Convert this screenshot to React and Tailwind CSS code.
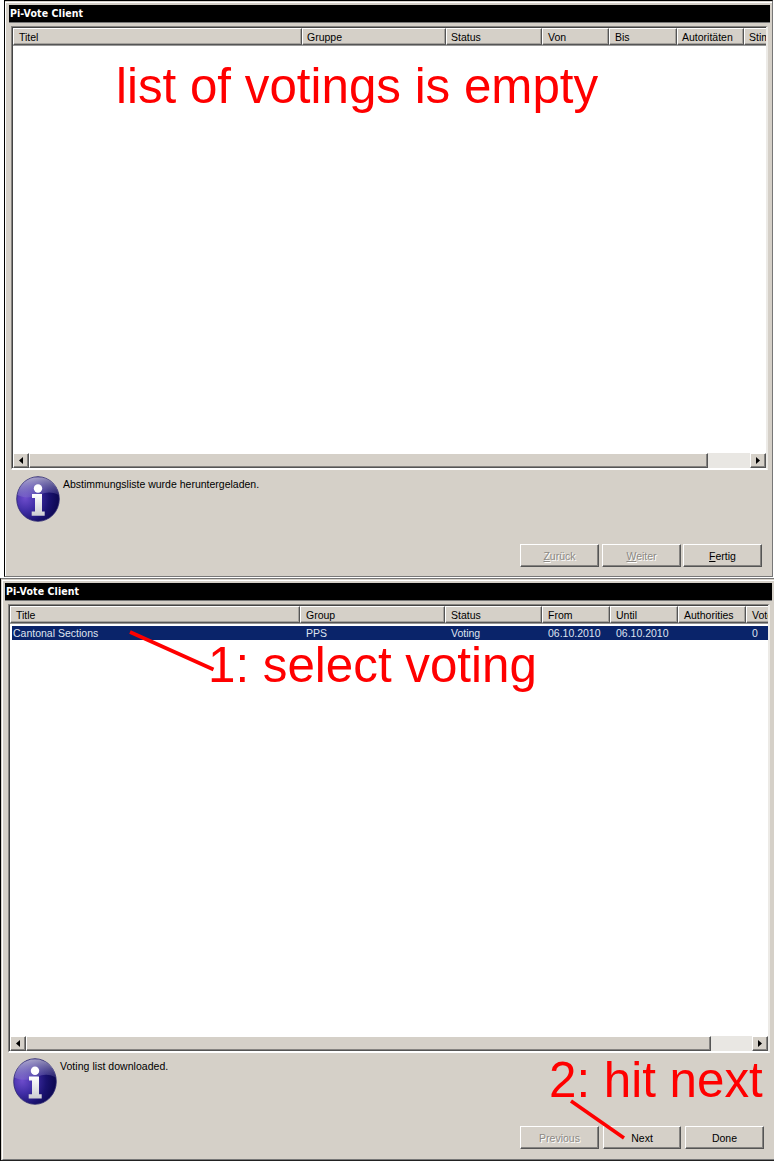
import React from "react";

const raised =
  "border border-t-white border-l-white border-r-[#555] border-b-[#555] shadow-[inset_-1px_-1px_0_#858380]";

function InfoIcon({ id, className }) {
  return (
    <svg viewBox="0 0 44 46" preserveAspectRatio="none" className={className}>
      <defs>
        <radialGradient id={id + "b"} cx="0.2" cy="0.48" r="0.78">
          <stop offset="0" stopColor="#6d4ccb" />
          <stop offset="0.35" stopColor="#422fa8" />
          <stop offset="0.72" stopColor="#1a1270" />
          <stop offset="1" stopColor="#0d0852" />
        </radialGradient>
        <linearGradient id={id + "g"} x1="0.3" y1="0" x2="0.6" y2="1">
          <stop offset="0" stopColor="#cfccdf" stopOpacity="0.8" />
          <stop offset="1" stopColor="#8f86cc" stopOpacity="0.2" />
        </linearGradient>
        <linearGradient id={id + "i"} x1="0" y1="0" x2="0" y2="1">
          <stop offset="0" stopColor="#ffffff" />
          <stop offset="1" stopColor="#cdcdd2" />
        </linearGradient>
      </defs>
      <ellipse cx="22" cy="23" rx="21.3" ry="22.3" fill={`url(#${id}b)`} stroke="#2b2670" strokeWidth="0.8" />
      <path d="M1.5 19C3 9 11 1.3 22 1.3S42 9 42.500 19C36 15.500 30 16 24 18.500C15 22 8 22.500 1.500 19Z" fill={`url(#${id}g)`} />
      <circle cx="22" cy="12.500" r="4.200" fill="#fff" />
      <path d="M16 18H26V35.500H28.700V39.700H15.700V35.500H19V22H16Z" fill={`url(#${id}i)`} />
    </svg>
  );
}

function Column({ width, pad = "pl-[5px]", children }) {
  return (
    <div
      className={`h-[17px] shrink-0 overflow-hidden border border-t-white border-l-white border-r-[#555] border-b-[#555] bg-[#d5d0c8] text-[10.5px] leading-[16px] whitespace-nowrap shadow-[inset_-1px_-1px_0_#a5a29d] ${pad} ${width}`}
    >
      {children}
    </div>
  );
}

function Arrow({ left }) {
  return (
    <svg viewBox="0 0 4 7" className="h-[7px] w-[4px]">
      <path d={left ? "M4 0V7L0 3.500Z" : "M0 0V7L4 3.500Z"} fill="#000" />
    </svg>
  );
}

function ScrollBar({ thumb }) {
  return (
    <div className="flex h-[15px] shrink-0 bg-[#e9e7e3]">
      <div className={`flex w-4 shrink-0 items-center justify-center bg-[#d5d0c8] ${raised}`}>
        <Arrow left />
      </div>
      <div className={`shrink-0 bg-[#d5d0c8] ${thumb} ${raised}`} />
      <div className="grow" />
      <div className={`flex w-4 shrink-0 items-center justify-center bg-[#d5d0c8] ${raised}`}>
        <Arrow />
      </div>
    </div>
  );
}

function Button({ width, disabled, children }) {
  return (
    <button
      className={`h-[23px] shrink-0 text-center text-[10.5px] leading-[20px] ${width} ${raised} ${
        disabled ? "text-[#8c8984] [text-shadow:1px_1px_0_#fff]" : "text-black"
      }`}
    >
      {children}
    </button>
  );
}

function TitleBar() {
  return (
    <div className="flex h-[17px] shrink-0 items-center bg-black pl-px text-[10.5px] leading-[17px] font-bold tracking-[0.1px] whitespace-nowrap text-white [font-family:'DejaVu_Sans_Condensed','DejaVu_Sans',sans-serif] [font-stretch:condensed]">
      Pi-Vote Client
    </div>
  );
}

function GermanWindow() {
  return (
    <section className="ml-1 flex h-[577px] w-[769px] flex-col border-t border-r border-b border-l border-t-black border-r-[#777] border-b-[#777] border-l-black bg-[#d5d0c8]">
      <div className="mt-px flex grow flex-col border-t border-l border-white pt-[3px] pr-[2px] pl-[3px]">
        <div className="-mt-px flex flex-col border-b border-[#777]">
          <TitleBar />
        </div>
        <div className="mt-[3px] ml-[2px] flex h-[444px] w-[757px] flex-col border-t border-r-2 border-b-2 border-l border-t-[#858380] border-r-[#eceae6] border-b-white border-l-[#858380]">
          <div className="flex grow flex-col border-t border-l border-[#444] bg-white">
            <div className="flex overflow-hidden border-b border-[#999]">
              <Column width="w-[289px]">Titel</Column>
              <Column width="w-[144px]" pad="pl-[4px]">Gruppe</Column>
              <Column width="w-[96px]" pad="pl-[4px]">Status</Column>
              <Column width="w-[67px]">Von</Column>
              <Column width="w-[68px]">Bis</Column>
              <Column width="w-[67px]" pad="pl-[4px]">Autoritäten</Column>
              <Column width="w-[60px]" pad="pl-[4px]">Stimmen</Column>
            </div>
            <div className="grow" />
            <ScrollBar thumb="w-[679px]" />
          </div>
        </div>
        <div className="ml-[7px] flex pt-[6px]">
          <InfoIcon id="de" className="h-[46px] w-[44px]" />
          <p className="mt-[0.5px] ml-[3px] text-[10.5px] leading-[14px]">Abstimmungsliste wurde heruntergeladen.</p>
        </div>
        <div className="mt-auto mr-[8px] mb-[9px] flex justify-end">
          <Button width="w-[79px]" disabled><u>Z</u>urück</Button>
          <div className="w-[3px]" />
          <Button width="w-[79px]" disabled><u>W</u>eiter</Button>
          <div className="w-[2px]" />
          <Button width="w-[79px]"><u>F</u>ertig</Button>
        </div>
      </div>
    </section>
  );
}

function EnglishWindow() {
  return (
    <section className="flex h-[583px] w-[774px] flex-col border-t border-b border-l border-t-[#777] border-b-[#222] border-l-black bg-[#d5d0c8]">
      <div className="mt-px ml-px flex grow flex-col border-t border-b border-l border-t-white border-b-[#777] border-l-white pt-[2px] pl-[2px]">
        <div className="mr-[2px] flex flex-col border-b border-[#777]">
          <TitleBar />
        </div>
        <div className="mt-[3px] ml-[3px] flex h-[449px] w-[762px] flex-col border-t border-r-2 border-b-2 border-l border-t-[#858380] border-r-[#eceae6] border-b-white border-l-[#858380]">
          <div className="flex grow flex-col border-t border-l border-[#444] bg-white">
            <div className="flex overflow-hidden border-b border-[#999]">
              <Column width="w-[290px]">Title</Column>
              <Column width="w-[145px]">Group</Column>
              <Column width="w-[97px]">Status</Column>
              <Column width="w-[68px]">From</Column>
              <Column width="w-[68px]">Until</Column>
              <Column width="w-[68px]">Authorities</Column>
              <Column width="w-[60px]">Votes</Column>
            </div>
            <div className="mt-[2px] ml-[2px] flex h-[14px] shrink-0 overflow-hidden bg-[#0a246a] text-[10.5px] leading-[14px] whitespace-nowrap text-[#dfe3f0]">
              <span className="w-[294px] shrink-0 pl-px">Cantonal Sections</span>
              <span className="w-[145px] shrink-0">PPS</span>
              <span className="w-[97px] shrink-0">Voting</span>
              <span className="w-[68px] shrink-0">06.10.2010</span>
              <span className="w-[136px] shrink-0">06.10.2010</span>
              <span className="shrink-0">0</span>
            </div>
            <div className="grow" />
            <ScrollBar thumb="w-[685px]" />
          </div>
        </div>
        <div className="ml-[8px] flex pt-[5px]">
          <InfoIcon id="en" className="h-[47px] w-[44px]" />
          <p className="mt-px ml-[3px] text-[10.5px] leading-[14px] tracking-[0.04px]">Voting list downloaded.</p>
        </div>
        <div className="mt-auto mr-[10px] mb-[10px] flex justify-end gap-[4px]">
          <Button width="w-[79px]" disabled>Previous</Button>
          <Button width="w-[78px]">Next</Button>
          <Button width="w-[79px]">Done</Button>
        </div>
      </div>
    </section>
  );
}

function Note({ place, children }) {
  return (
    <div className={`absolute text-[49.3px] leading-[56px] whitespace-nowrap text-[#ff0000] ${place}`}>{children}</div>
  );
}

export default function App() {
  return (
    <main className="relative h-[1161px] w-[774px] overflow-hidden bg-white text-black [font-family:'Liberation_Sans',Arial,sans-serif]">
      <GermanWindow />
      <div className="h-px" />
      <EnglishWindow />
      <Note place="left-[116px] top-[58px]">list of votings is empty</Note>
      <Note place="left-[208px] top-[637px]">1: select voting</Note>
      <Note place="left-[549px] top-[1052px]">2: hit next</Note>
      <svg className="pointer-events-none absolute inset-0" width="774" height="1161">
        <path d="M130 632L213.500 669.500M571 1101L624 1138" stroke="#f00" strokeWidth="3.600" fill="none" />
      </svg>
    </main>
  );
}
